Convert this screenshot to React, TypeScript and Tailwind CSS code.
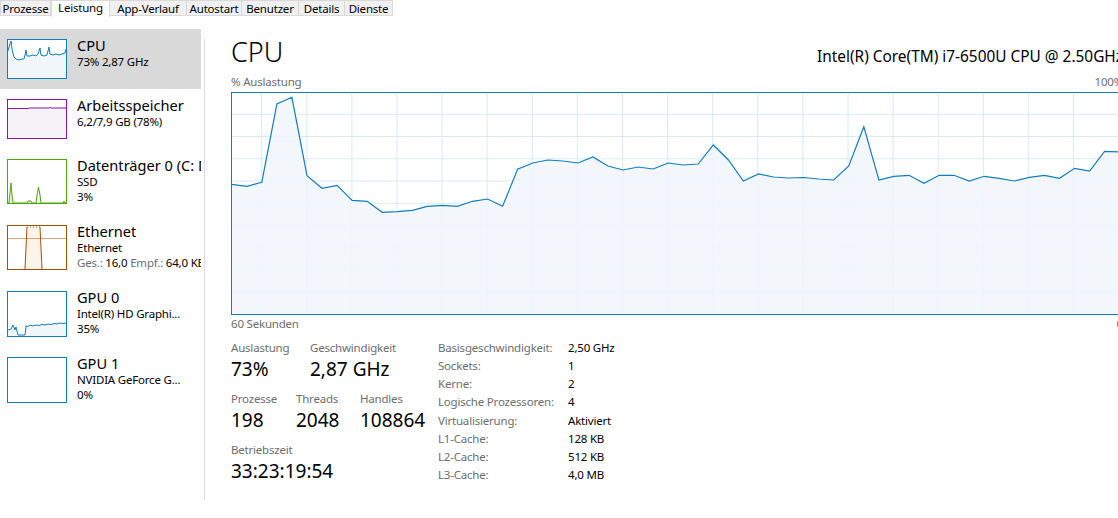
import React from 'react';

const tabs = [
  { label: 'Prozesse', w: 'w-[51px]' },
  { label: 'Leistung', w: 'w-[59px]', active: true },
  { label: 'App-Verlauf', w: 'w-[78px]' },
  { label: 'Autostart', w: 'w-[56px]' },
  { label: 'Benutzer', w: 'w-[58px]' },
  { label: 'Details', w: 'w-[47px]' },
  { label: 'Dienste', w: 'w-[49px]' },
];

// % Auslastung, gelesen aus dem Screenshot (absolute y, Graph oben bei 92)
const cpuData = [
  184.3, 186.3, 182.3, 104, 97.3, 175.7, 188.3, 185.3, 200.3, 201.3, 212.3, 211.7, 210.3,
  206.3, 205.3, 206.3, 201.3, 199, 206.3, 169.3, 163, 160, 161, 163, 157, 166, 170, 167,
  169, 163, 165, 164, 145, 160, 181, 174, 177, 178, 177.5, 179, 180, 166, 126.7, 180,
  176.3, 175.3, 183.3, 175.3, 175.3, 181, 176.3, 178.3, 181, 177.3, 175.3, 178.3, 168.3,
  171, 151.3, 152, 152,
];

const GW = 892;
const GH = 223;

const CpuGraph: React.FC = () => {
  const pts = cpuData.map((y, i) => [0.7 + i * 15.05, y - 92] as const);
  const line = pts.map(([x, y], i) => `${i === 0 ? 'M' : 'L'}${x.toFixed(1)},${y.toFixed(1)}`).join(' ');
  const area = `${line} L${pts[pts.length - 1][0].toFixed(1)},${GH} L0.7,${GH} Z`;
  const vLines: number[] = [];
  for (let x = 30.7; x < GW; x += 45.1) vLines.push(x);
  const hLines: number[] = [];
  for (let k = 1; k < 10; k++) hLines.push(k * 22.26);
  return (
    <svg width={GW} height={GH} className="block">
      {vLines.map((x) => (
        <line key={'v' + x} x1={x} x2={x} y1={0} y2={GH} stroke="#d9eaf5" strokeWidth={1} />
      ))}
      {hLines.map((y) => (
        <line key={'h' + y} x1={0} x2={GW} y1={y} y2={y} stroke="#d9eaf5" strokeWidth={1} />
      ))}
      <path d={area} fill="#f1f6fa" fillOpacity={0.85} />
      <path d={line} fill="none" stroke="#117dbb" strokeWidth={1.2} />
      <rect x={0.5} y={0.5} width={GW - 1} height={GH - 1} fill="none" stroke="#117dbb" />
    </svg>
  );
};

const Thumb: React.FC<{ h: number; color: string; children?: React.ReactNode }> = ({ h, color, children }) => (
  <svg width={60} height={h} className="block shrink-0 bg-white">
    {children}
    <rect x={0.5} y={0.5} width={59} height={h - 1} fill="none" stroke={color} />
  </svg>
);

const CpuThumb = () => {
  const d =
    'M1,12 L2,8 L4,2 L5,10 L7,18 L9,20 L12,21 L15,20 L17,20 L18,16 L19,11 L20,17 L23,17 L26,16 L29,17 L31,15 L33,9 L34,16 L37,17 L40,16 L42,8 L43,15 L46,16 L49,15 L52,16 L55,15 L58,14 L59,10';
  return (
    <Thumb h={40} color="#117dbb">
      <path d={`${d} L59,39 L1,39 Z`} fill="#f1f6fa" />
      <path d={d} fill="none" stroke="#117dbb" strokeWidth={1} />
    </Thumb>
  );
};

const MemThumb = () => {
  const d = 'M1,9.5 L21,9.5 L22,9 L42,9 L43,8.5 L44,9 L59,9';
  return (
    <Thumb h={40} color="#8b12ae">
      <path d={`${d} L59,39 L1,39 Z`} fill="#f4f2f4" />
      <path d={d} fill="none" stroke="#8b12ae" strokeWidth={1} />
    </Thumb>
  );
};

const DiskThumb = () => {
  const d =
    'M1,44 L2,44 L3,34 L4,24 L5,36 L6,44 L20,44 L21,42 L24,42 L25,44 L29,44 L30,36 L31.5,28 L33,36 L34,44 L56,44 L57,42 L58,44 L59,44';
  return (
    <Thumb h={45} color="#4da60c">
      <path d={`${d} Z`} fill="#eff7e6" />
      <path d={d} fill="none" stroke="#4da60c" strokeWidth={1} />
    </Thumb>
  );
};

const EthThumb = () => (
  <Thumb h={45} color="#a74f01">
    <path d="M18,44 L20,2 L33,2 L35,44 Z" fill="#fcf3eb" />
    <line x1={1} x2={59} y1={13.5} y2={13.5} stroke="#d9a27a" strokeWidth={1} />
    <path d="M18,44 L20,2 M33,2 L35,44" fill="none" stroke="#a74f01" strokeWidth={1} />
    <path d="M20,2 L33,2" fill="none" stroke="#a74f01" strokeWidth={1} strokeDasharray="1 2" />
  </Thumb>
);

const Gpu0Thumb = () => {
  const d =
    'M1,39 L4,38 L6,34 L8,39 L9,36 L11,44 L18,44 L19,35 L21,35.5 L23,34 L26,35 L29,34 L32,34.5 L35,33.5 L38,34 L41,33 L44,33.5 L47,32.5 L50,33 L53,32 L56,32.5 L59,32';
  return (
    <Thumb h={46} color="#117dbb">
      <path d={`${d} L59,45 L1,45 Z`} fill="#f1f6fa" />
      <path d={d} fill="none" stroke="#117dbb" strokeWidth={1} />
    </Thumb>
  );
};

const Gpu1Thumb = () => <Thumb h={46} color="#117dbb" />;

const SideItem: React.FC<{
  thumb: React.ReactNode;
  title: string;
  lines: React.ReactNode[];
  selected?: boolean;
  h: string;
}> = ({ thumb, title, lines, selected, h }) => (
  <div className={`flex items-start pl-[7px] gap-[10px] overflow-hidden ${h} ${selected ? 'bg-[#d9d9d9]' : ''}`}>
    <div className="mt-[10px]">{thumb}</div>
    <div className="mt-[7px] whitespace-nowrap">
      <div className="text-[14.6px] leading-[18px] text-black">{title}</div>
      {lines.map((l, i) => (
        <div key={i} className="text-[11.5px] tracking-[-0.2px] leading-[15px] text-black">
          {l}
        </div>
      ))}
    </div>
  </div>
);

const Stat: React.FC<{ label: string; value: string; className?: string }> = ({ label, value, className }) => (
  <div className={className}>
    <div className="text-[11.5px] tracking-[-0.2px] leading-[18px] text-[#6d6d6d] whitespace-nowrap">{label}</div>
    <div className="text-[19px] leading-[25px] text-black whitespace-nowrap">{value}</div>
  </div>
);

const specs: [string, string][] = [
  ['Basisgeschwindigkeit:', '2,50 GHz'],
  ['Sockets:', '1'],
  ['Kerne:', '2'],
  ['Logische Prozessoren:', '4'],
  ['Virtualisierung:', 'Aktiviert'],
  ['L1-Cache:', '128 KB'],
  ['L2-Cache:', '512 KB'],
  ['L3-Cache:', '4,0 MB'],
];

export default function App() {
  return (
    <div className="w-[1118px] h-[518px] overflow-hidden bg-white font-['Noto_Sans',sans-serif] text-black">
      {/* Reiter */}
      <div className="flex h-[17px] items-start">
        {tabs.map((t) =>
          t.active ? (
            <div
              key={t.label}
              className={`${t.w} h-[17px] shrink-0 bg-white border-x border-t border-[#d9d9d9] text-[11.5px] tracking-[-0.2px] leading-[13px] text-center text-black`}
            >
              {t.label}
            </div>
          ) : (
            <div
              key={t.label}
              className={`${t.w} h-[16px] shrink-0 bg-[#f0f0f0] border border-[#d9d9d9] -ml-px first:ml-0 text-[11.5px] tracking-[-0.2px] leading-[16px] text-center text-black`}
            >
              {t.label}
            </div>
          )
        )}
      </div>

      <div className="flex mt-[12px]">
        {/* Seitenleiste */}
        <div className="w-[201px] shrink-0 flex flex-col">
          <SideItem selected h="h-[60px]" thumb={<CpuThumb />} title="CPU" lines={['73%  2,87 GHz']} />
          <SideItem h="h-[60px]" thumb={<MemThumb />} title="Arbeitsspeicher" lines={['6,2/7,9 GB (78%)']} />
          <SideItem h="h-[66px]" thumb={<DiskThumb />} title="Datenträger 0 (C: D:)" lines={['SSD', '3%']} />
          <SideItem
            h="h-[66px]"
            thumb={<EthThumb />}
            title="Ethernet"
            lines={[
              'Ethernet',
              <span key="e">
                <span className="text-[#6d6d6d]">Ges.:</span> 16,0 <span className="text-[#6d6d6d]">Empf.:</span> 64,0 KBit/s
              </span>,
            ]}
          />
          <SideItem h="h-[66px]" thumb={<Gpu0Thumb />} title="GPU 0" lines={['Intel(R) HD Graphi...', '35%']} />
          <SideItem h="h-[66px]" thumb={<Gpu1Thumb />} title="GPU 1" lines={['NVIDIA GeForce G...', '0%']} />
        </div>

        <div className="w-[3px] shrink-0" />
        <div className="w-px h-[461px] mt-[10px] bg-[#dadada] shrink-0" />

        {/* Hauptbereich */}
        <div className="pl-[26px] shrink-0">
          <div className="w-[892px]">
            <div className="flex items-baseline justify-between pt-[5px] h-[41px]">
              <div className="text-[27px] leading-[36px] font-light text-black">CPU</div>
              <div className="text-[15.4px] leading-[20px] text-black whitespace-nowrap">
                Intel(R) Core(TM) i7-6500U CPU @ 2.50GHz
              </div>
            </div>
            <div className="flex justify-between mt-[3px] text-[11.5px] tracking-[-0.2px] leading-[18px] text-[#6d6d6d]">
              <span>% Auslastung</span>
              <span>100%</span>
            </div>
            <div className="mt-px">
              <CpuGraph />
            </div>
            <div className="flex justify-between text-[11.5px] tracking-[-0.2px] leading-[18px] text-[#6d6d6d]">
              <span>60 Sekunden</span>
              <span>0</span>
            </div>

            <div className="flex mt-[6px]">
              <div className="w-[207px] shrink-0">
                <div className="flex">
                  <Stat label="Auslastung" value="73%" className="w-[79px]" />
                  <Stat label="Geschwindigkeit" value="2,87 GHz" />
                </div>
                <div className="flex mt-[8px]">
                  <Stat label="Prozesse" value="198" className="w-[65px]" />
                  <Stat label="Threads" value="2048" className="w-[64px]" />
                  <Stat label="Handles" value="108864" />
                </div>
                <Stat label="Betriebszeit" value="33:23:19:54" className="mt-[8px]" />
              </div>
              <div className="grid grid-cols-[130px_auto] text-[11.5px] tracking-[-0.2px] leading-[18px] whitespace-nowrap">
                {specs.map(([k, v]) => (
                  <React.Fragment key={k}>
                    <div className="text-[#6d6d6d]">{k}</div>
                    <div className="text-black">{v}</div>
                  </React.Fragment>
                ))}
              </div>
            </div>
          </div>
        </div>
      </div>
    </div>
  );
}
